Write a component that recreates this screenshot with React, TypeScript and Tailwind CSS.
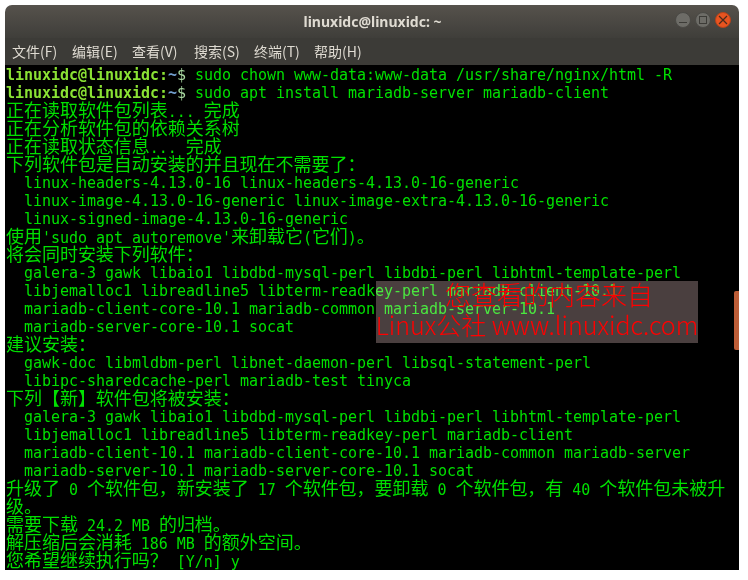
const lines = [
  "正在读取软件包列表... 完成",
  "正在分析软件包的依赖关系树",
  "正在读取状态信息... 完成",
  "下列软件包是自动安装的并且现在不需要了：",
  "  linux-headers-4.13.0-16 linux-headers-4.13.0-16-generic",
  "  linux-image-4.13.0-16-generic linux-image-extra-4.13.0-16-generic",
  "  linux-signed-image-4.13.0-16-generic",
  "使用'sudo apt autoremove'来卸载它(它们)。",
  "将会同时安装下列软件：",
  "  galera-3 gawk libaio1 libdbd-mysql-perl libdbi-perl libhtml-template-perl",
  "  libjemalloc1 libreadline5 libterm-readkey-perl mariadb-client-10.1",
  "  mariadb-client-core-10.1 mariadb-common mariadb-server-10.1",
  "  mariadb-server-core-10.1 socat",
  "建议安装：",
  "  gawk-doc libmldbm-perl libnet-daemon-perl libsql-statement-perl",
  "  libipc-sharedcache-perl mariadb-test tinyca",
  "下列【新】软件包将被安装：",
  "  galera-3 gawk libaio1 libdbd-mysql-perl libdbi-perl libhtml-template-perl",
  "  libjemalloc1 libreadline5 libterm-readkey-perl mariadb-client",
  "  mariadb-client-10.1 mariadb-client-core-10.1 mariadb-common mariadb-server",
  "  mariadb-server-10.1 mariadb-server-core-10.1 socat",
  "升级了 0 个软件包，新安装了 17 个软件包，要卸载 0 个软件包，有 40 个软件包未被升",
  "级。",
  "需要下载 24.2 MB 的归档。",
  "解压缩后会消耗 186 MB 的额外空间。",
  "您希望继续执行吗？ [Y/n] y",
];

const menu = [
  ["文件(F)", "w-[60px]"],
  ["编辑(E)", "w-[60px]"],
  ["查看(V)", "w-[62px]"],
  ["搜索(S)", "w-[60px]"],
  ["终端(T)", "w-[60px]"],
  ["帮助(H)", "w-[60px]"],
];

// terminal grid: wide glyphs take two cells, so they get their own size
function Row({ text }: { text: string }) {
  const runs = text.match(/[\u3000-\u9fff\uff00-\uffef]+|[^\u3000-\u9fff\uff00-\uffef]+/g) ?? [];
  const wide = /[\u3000-\u9fff\uff00-\uffef]/.test(text);
  return (
    <div className={`h-[18px] leading-[18px] whitespace-pre ${wide ? "pt-px" : ""}`}>
      {runs.map((r, i) =>
        /[\u3000-\u9fff\uff00-\uffef]/.test(r) ? (
          <span key={i} className="text-[18px] leading-[8px] font-['Noto_Sans_CJK_SC',sans-serif]">
            {r}
          </span>
        ) : (
          <span key={i}>{r}</span>
        )
      )}
    </div>
  );
}

function Prompt({ cmd }: { cmd: string }) {
  return (
    <div className="h-[18px] leading-[18px] whitespace-pre">
      <span className="font-bold text-[#8ae234]">linuxidc@linuxidc:</span>
      <span className="font-bold text-[#729fcf]">~</span>
      <span className="text-[#a8d8a0]">$ </span>
      <span>{cmd}</span>
    </div>
  );
}

export default function App() {
  return (
    <div className="w-[748px] h-[580px] bg-white pt-[5px] pl-[5px] overflow-hidden">
      <div className="relative w-[734px] h-[565px] flex flex-col rounded-t-[7px] overflow-hidden">
        <div className="h-[33px] shrink-0 flex items-center justify-between bg-gradient-to-b from-[#56524c] to-[#3f3e3a]">
          <div className="flex-1 pl-[1px] text-center text-[14px] font-bold text-[#dfdbd2] font-['Noto_Sans',sans-serif]">
            linuxidc@linuxidc: ~
          </div>
          <div className="absolute right-[8px] top-[7px] flex gap-[4px]">
            <div className="size-[16px] rounded-full bg-[#6d6c67] border border-[#4a4945] flex items-center justify-center">
              <div className="w-[8px] h-[1.5px] mt-[5px] bg-[#3c3b37]" />
            </div>
            <div className="size-[16px] rounded-full bg-[#6d6c67] border border-[#4a4945] flex items-center justify-center">
              <div className="size-[8px] border border-[#3c3b37]" />
            </div>
            <div className="size-[16px] rounded-full bg-[#e95420] border border-[#b8431a] flex items-center justify-center">
              <svg viewBox="0 0 10 10" className="size-[10px]" fill="none" stroke="#4a2a1c" strokeWidth="1.2">
                <path d="M1 1l8 8M9 1l-8 8" />
              </svg>
            </div>
          </div>
        </div>

        <div className="h-[27px] shrink-0 flex items-center pl-[7px] bg-[#3c3b37] text-[14px] text-[#dfdbd2] font-['Noto_Sans_CJK_SC',sans-serif]">
          {menu.map(([label, w]) => (
            <div key={label} className={w}>
              {label}
            </div>
          ))}
        </div>

        <div className="flex-1 bg-black pt-px pl-px text-[15px] text-[#00e000] tracking-[-0.03px] font-['DejaVu_Sans_Mono',monospace] overflow-hidden">
          <Prompt cmd="sudo chown www-data:www-data /usr/share/nginx/html -R" />
          <Prompt cmd="sudo apt install mariadb-server mariadb-client" />
          {lines.map((l, i) => (
            <Row key={i} text={l} />
          ))}
        </div>

        {/* scrollbar thumb */}
        <div className="absolute right-0 top-[286px] w-[5px] h-[59px] bg-[#bd5e38] rounded-l-[2px]" />

        {/* watermark: the panel screens over the terminal, so its text stays bright */}
        <div className="absolute left-[371px] top-[276px] w-[322px] h-[62px] bg-[#4a3f3f] mix-blend-screen" />
        <div className="absolute left-[371px] top-[274px] w-[322px] h-[62px] flex flex-col items-center text-[#ff0000] font-['Noto_Sans_CJK_SC',sans-serif] font-light">
          <div className="h-[30px] pl-[24px] text-[26px] leading-[30px] whitespace-pre">您查看的内容来自</div>
          <div className="h-[30px] text-[25px] leading-[30px] whitespace-pre">Linux公社 www.linuxidc.com</div>
        </div>
      </div>
    </div>
  );
}
